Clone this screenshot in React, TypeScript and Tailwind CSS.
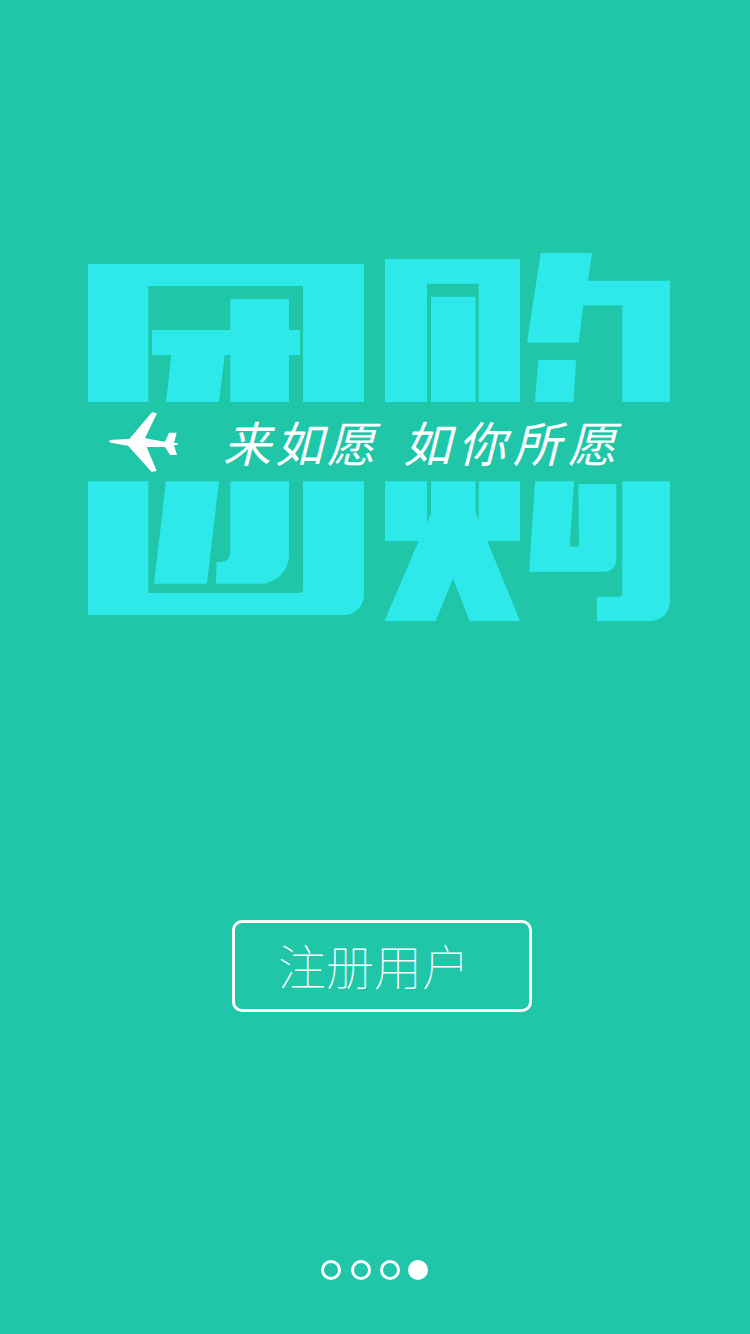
const CJK = "font-['Noto_Sans_CJK_SC','Noto_Sans_CJK_TC',sans-serif]";

function LogoTop() {
	return (
		<svg width="750" height="149" viewBox="0 253 750 149" className="block" fill="#2de9e9">
			<path d="M88 264H364V402H303V286H148.3V402H88Z" />
			<path d="M152 330H230.3V299H289V330H300V355H289V402H230.3V355H224.7L219 402H166L171.3 355H152Z" />
			<path d="M385 259H520V402H478.7V283.7H427V402H385Z" />
			<path d="M431 296.7H475.7V402H431Z" />
			<path d="M540.7 253H592L588 280.7H670V402H622.3V305.3H583.3L578.7 342.7H527Z" />
			<path d="M538.3 360H576L573.7 402H535Z" />
		</svg>
	);
}

function LogoBottom() {
	return (
		<svg width="750" height="141" viewBox="0 481 750 141" className="block" fill="#2de9e9">
			<path d="M88 481.3H148.3V593H299Q303 593 303 589V481.3H364V595A20 20 0 0 1 344 615H88Z" />
			<path d="M166 481.3H219L207 583.7H154Z" />
			<path d="M230.3 481.3H289V555A28.7 28.7 0 0 1 260.3 583.7H216L216.7 562H220Q230.3 562 230.3 550Z" />
			<path d="M385 481.3H427V522.7L431 513V481.3H475.7V513L478.7 520.7V481.3H520V541H487.3L520 621H469.7L453 578.7L435.7 621H384.5L418.7 541H385Z" />
			<path d="M535 481.3H574L570 543Q570 546.7 572 546.7H577Q579 546.7 579 544L578.3 484H616.3V560A11.7 11.7 0 0 1 604.6 571.7H529Z" />
			<path d="M622.3 481.3H670V601A20 20 0 0 1 650 621H597V596.7H618.3Q622.3 596.7 622.3 592Z" />
		</svg>
	);
}

function Plane() {
	return (
		<svg width="70" height="62" viewBox="108 411 70 62" className="block shrink-0" fill="#ffffff">
			<path d="M109 441Q109 440 112 439.8L129.3 439L152 412.2L157 413.3L145 438.3L165 441.7L169 432.7H176.7L174 443H177.5V445H174L177 455H170L165 447L146.7 447L156.7 471L151.7 472L128 445.7L112 443Q109 442.4 109 441Z" />
		</svg>
	);
}

export default function App() {
	return (
		<main className="flex min-h-[1334px] w-[750px] flex-col bg-[#1fc6a8] pt-[253px]">
			<LogoTop />
			<div className="flex h-[79px] items-center pl-[108px]">
				<Plane />
				<div className={`mb-[2px] ml-[45px] text-[48px] leading-none font-normal whitespace-nowrap text-white italic tracking-[4px] ${CJK}`}>
					来如愿
				</div>
				<div className={`mb-[2px] ml-[24px] text-[48px] leading-none font-normal whitespace-nowrap text-white italic tracking-[7px] ${CJK}`}>
					如你所愿
				</div>
			</div>
			<LogoBottom />
			<button className={`mt-[298px] ml-[232px] flex h-[92px] w-[300px] items-center rounded-[10px] border-[3px] border-white pb-[4px] pl-[43px] text-[48px] font-thin text-white ${CJK}`}>
				注册用户
			</button>
			<div className="mt-[248px] ml-[321px] flex">
				<span className="h-5 w-5 rounded-full border-[3px] border-white" />
				<span className="ml-[10px] h-5 w-5 rounded-full border-[3px] border-white" />
				<span className="ml-[9px] h-5 w-5 rounded-full border-[3px] border-white" />
				<span className="ml-2 h-5 w-5 rounded-full bg-white" />
			</div>
		</main>
	);
}
